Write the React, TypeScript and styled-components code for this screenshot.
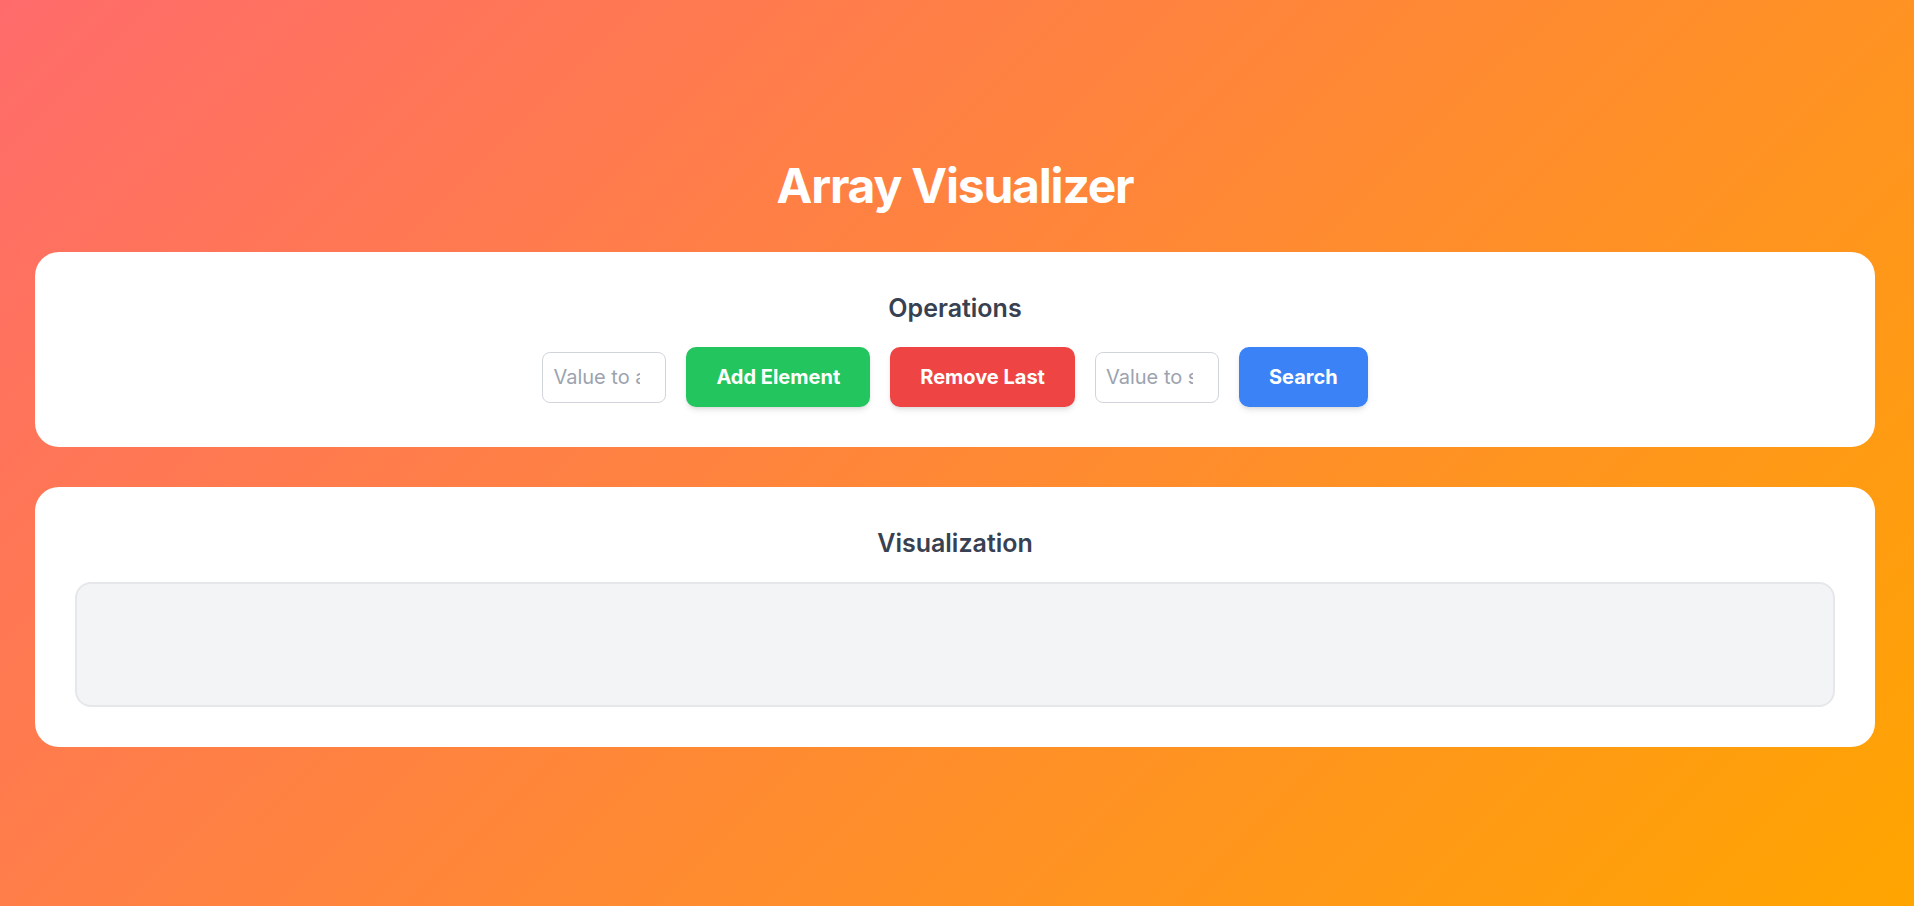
import React from "react";
import styled, { createGlobalStyle } from "styled-components";

const GlobalStyle = createGlobalStyle`
  *, *::before, *::after { box-sizing: border-box; }
  html, body { margin: 0; padding: 0; }
  body {
    font-family: Inter, "Noto Sans", "Liberation Sans", sans-serif;
    background: linear-gradient(135deg, #ff6b6b 0%, #ffa500 100%);
    min-height: 100vh;
  }
`;

const Page = styled.main`
  min-height: 100vh;
  display: flex;
  flex-direction: column;
  justify-content: center;
  padding: 3px 39px 0 35px;
`;

const Title = styled.h1`
  margin: 0 0 42px;
  text-align: center;
  color: #ffffff;
  font-size: 48px;
  line-height: 48px;
  font-weight: 700;
  letter-spacing: -0.025em;
`;

const Card = styled.section`
  background: #ffffff;
  border-radius: 24px;
  padding: 40px;
  & + & {
    margin-top: 40px;
  }
`;

const CardTitle = styled.h2`
  margin: 0 0 23px;
  text-align: center;
  color: #374151;
  font-size: 25px;
  line-height: 32px;
  font-weight: 600;
`;

const Controls = styled.div`
  display: flex;
  justify-content: center;
  align-items: center;
  gap: 20px;
`;

const ValueInput = styled.input`
  width: 124px;
  height: 51px;
  padding: 0 10px;
  border: 1px solid #d1d5db;
  border-radius: 8px;
  font-family: inherit;
  font-size: 20px;
  color: #374151;
  background: #ffffff;
  outline: none;
  &::placeholder {
    color: #9ca3af;
  }
`;

const ActionButton = styled.button<{ $color: string }>`
  height: 60px;
  padding: 0 30px;
  border: none;
  border-radius: 10px;
  background: ${(p) => p.$color};
  color: #ffffff;
  font-family: inherit;
  font-size: 20px;
  line-height: 28px;
  font-weight: 700;
  cursor: pointer;
  box-shadow: 0 4px 6px -1px rgba(0, 0, 0, 0.1), 0 2px 4px -2px rgba(0, 0, 0, 0.1);
`;

const Stage = styled.div`
  height: 125px;
  background: #f3f4f6;
  border: 2px solid #e5e7eb;
  border-radius: 16px;
`;

export default function App() {
  return (
    <>
      <GlobalStyle />
      <Page>
        <Title>Array Visualizer</Title>
        <Card>
          <CardTitle>Operations</CardTitle>
          <Controls>
            <ValueInput type="number" placeholder="Value to add" />
            <ActionButton $color="#22c55e">Add Element</ActionButton>
            <ActionButton $color="#ef4444">Remove Last</ActionButton>
            <ValueInput type="number" placeholder="Value to search" />
            <ActionButton $color="#3b82f6">Search</ActionButton>
          </Controls>
        </Card>
        <Card>
          <CardTitle>Visualization</CardTitle>
          <Stage />
        </Card>
      </Page>
    </>
  );
}
